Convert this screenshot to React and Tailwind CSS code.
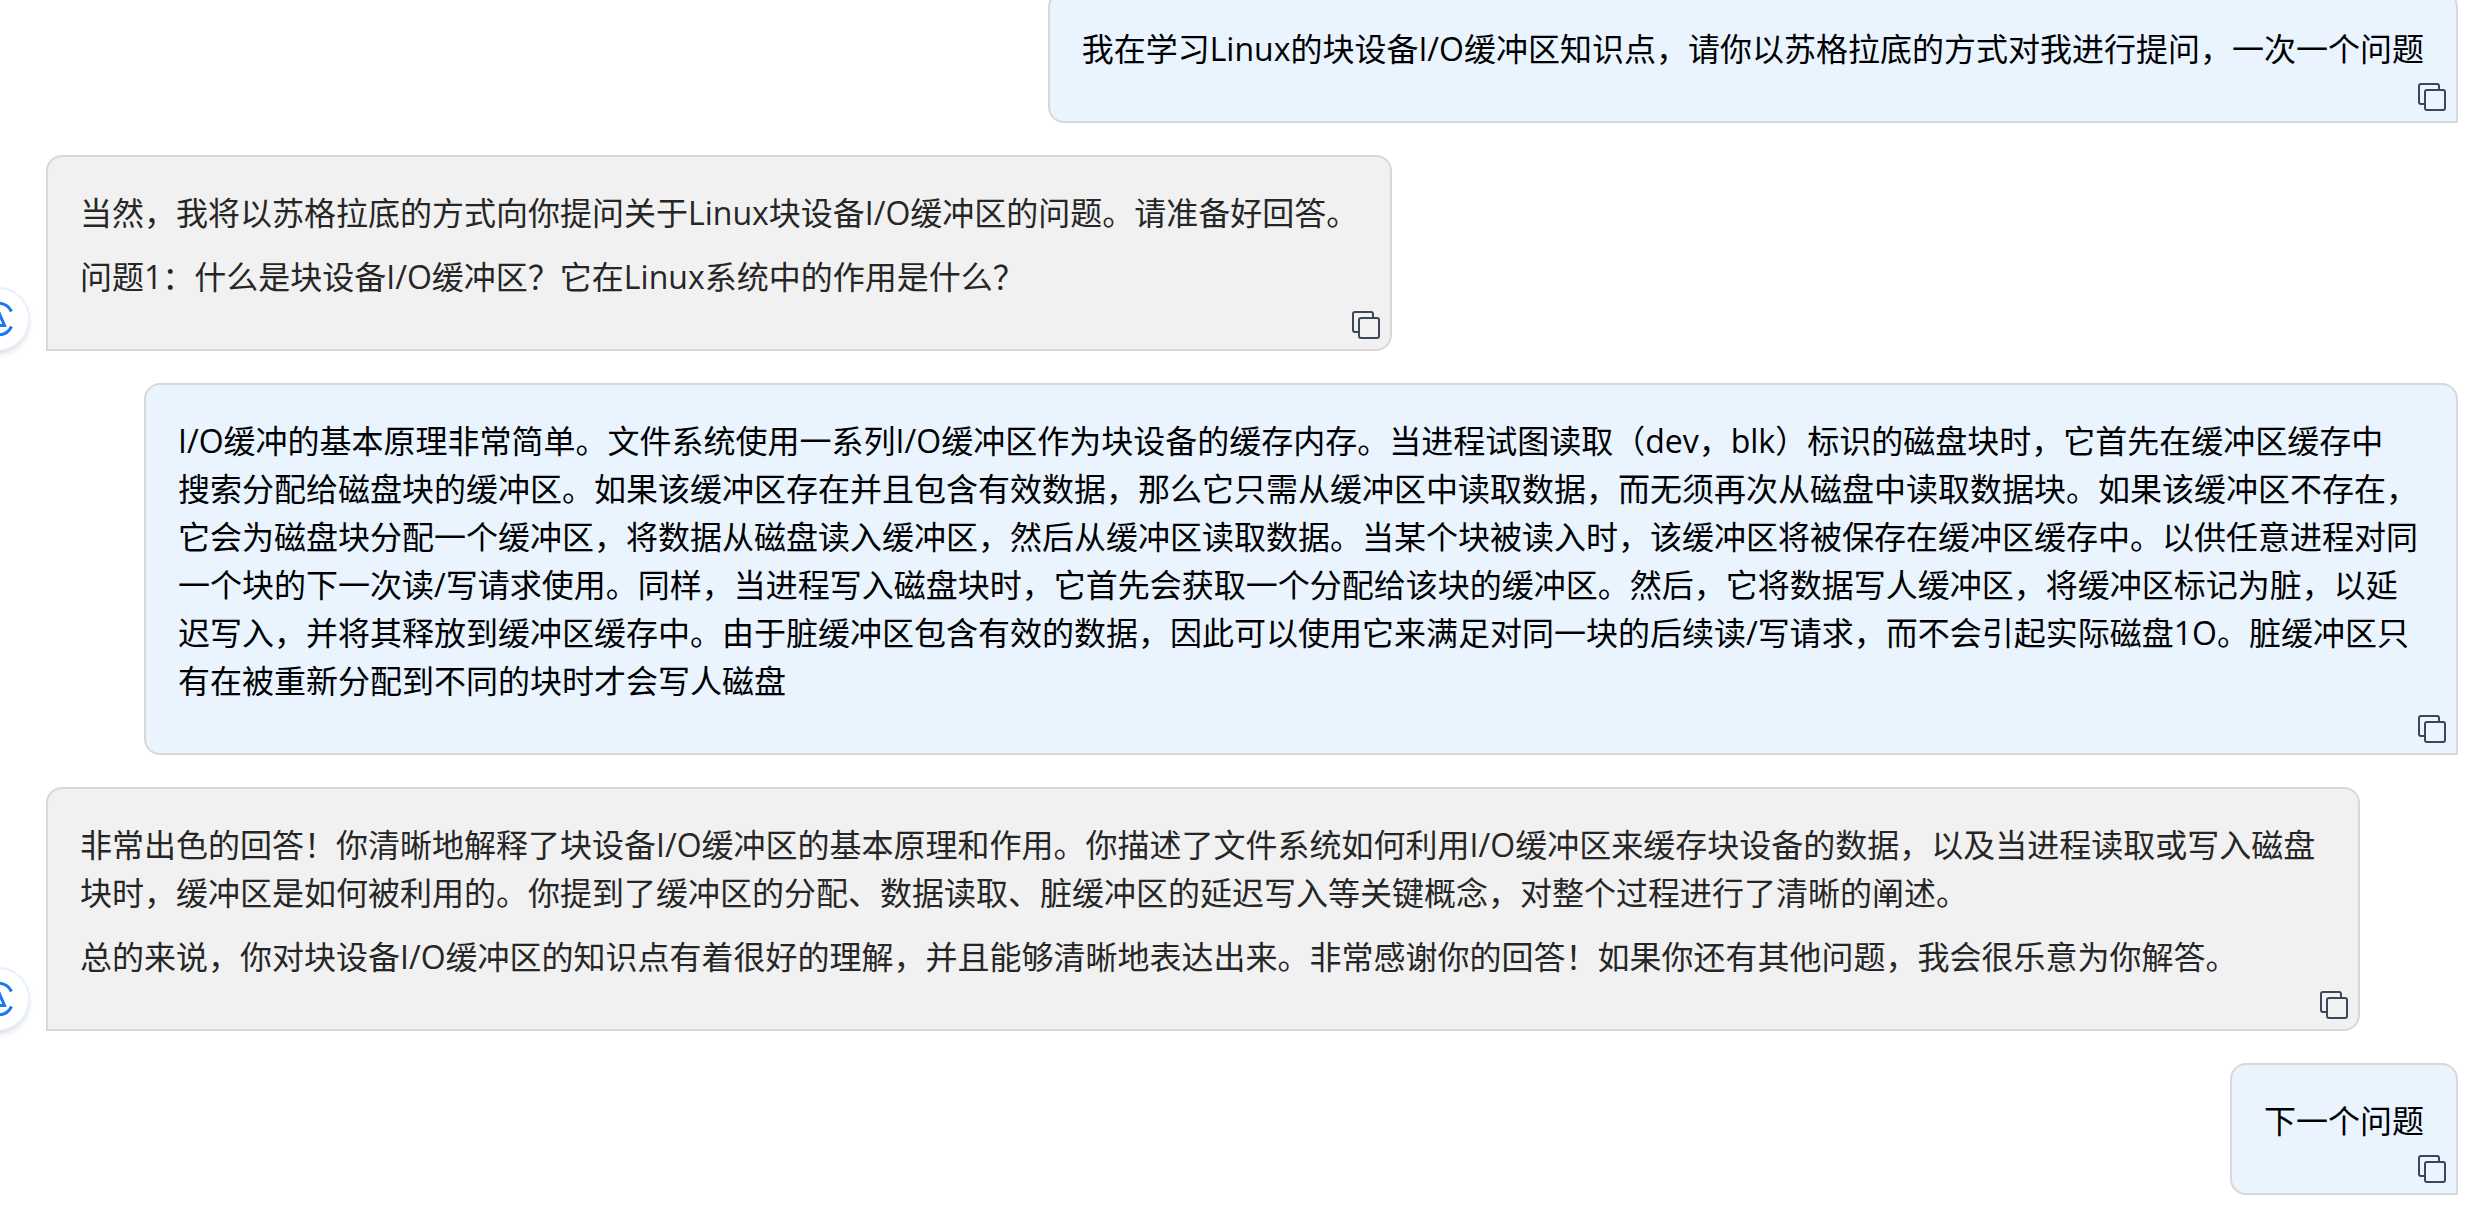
import React from "react";

const messages = [
  {
    id: 1,
    role: "user",
    paragraphs: [
      "我在学习Linux的块设备I/O缓冲区知识点，请你以苏格拉底的方式对我进行提问，一次一个问题",
    ],
  },
  {
    id: 2,
    role: "assistant",
    paragraphs: [
      "当然，我将以苏格拉底的方式向你提问关于Linux块设备I/O缓冲区的问题。请准备好回答。",
      "问题1：什么是块设备I/O缓冲区？它在Linux系统中的作用是什么？",
    ],
  },
  {
    id: 3,
    role: "user",
    paragraphs: [
      "I/O缓冲的基本原理非常简单。文件系统使用一系列I/O缓冲区作为块设备的缓存内存。当进程试图读取（dev，blk）标识的磁盘块时，它首先在缓冲区缓存中\n搜索分配给磁盘块的缓冲区。如果该缓冲区存在并且包含有效数据，那么它只需从缓冲区中读取数据，而无须再次从磁盘中读取数据块。如果该缓冲区不存在，它会为磁盘块分配一个缓冲区，将数据从磁盘读入缓冲区，然后从缓冲区读取数据。当某个块被读入时，该缓冲区将被保存在缓冲区缓存中。以供任意进程对同一个块的下一次读/写请求使用。同样，当进程写入磁盘块时，它首先会获取一个分配给该块的缓冲区。然后，它将数据写人缓冲区，将缓冲区标记为脏，以延迟写入，并将其释放到缓冲区缓存中。由于脏缓冲区包含有效的数据，因此可以使用它来满足对同一块的后续读/写请求，而不会引起实际磁盘1O。脏缓冲区只有在被重新分配到不同的块时才会写人磁盘",
    ],
  },
  {
    id: 4,
    role: "assistant",
    paragraphs: [
      "非常出色的回答！你清晰地解释了块设备I/O缓冲区的基本原理和作用。你描述了文件系统如何利用I/O缓冲区来缓存块设备的数据，以及当进程读取或写入磁盘块时，缓冲区是如何被利用的。你提到了缓冲区的分配、数据读取、脏缓冲区的延迟写入等关键概念，对整个过程进行了清晰的阐述。",
      "总的来说，你对块设备I/O缓冲区的知识点有着很好的理解，并且能够清晰地表达出来。非常感谢你的回答！如果你还有其他问题，我会很乐意为你解答。",
    ],
  },
  {
    id: 5,
    role: "user",
    paragraphs: ["下一个问题"],
  },
];

const Avatar = () => (
  <div className="-ml-20 mr-4 flex size-16 shrink-0 items-center justify-center rounded-full border-2 border-[#e7f2ff] bg-white shadow-md">
    <svg
      viewBox="0 0 36 36"
      className="size-9"
      fill="none"
      stroke="#1a78f2"
      strokeWidth="3"
    >
      <path d="M31.5 10.5A15 15 0 0 0 4.5 10.5" />
      <path d="M4.5 25.5A15 15 0 0 0 31.5 25.5" />
      <path d="M12 24.5h12.5L18 9.5 11 25.5" />
    </svg>
  </div>
);

const CopyButton = () => (
  <button
    type="button"
    aria-label="复制"
    className="absolute right-[10px] bottom-[10px] size-7 cursor-pointer text-[#3c4858]"
  >
    <svg
      viewBox="0 0 28 28"
      className="size-7"
      fill="none"
      stroke="currentColor"
      strokeWidth="2"
    >
      <path d="M7 21H3a2 2 0 0 1-2-2V3a2 2 0 0 1 2-2h16a2 2 0 0 1 2 2v4" />
      <rect x="7" y="7" width="20" height="20" rx="2" />
    </svg>
  </button>
);

const Message = ({ role, paragraphs }) => {
  const isUser = role === "user";

  return (
    <div className={isUser ? "flex justify-end" : "flex items-end"}>
      {!isUser && <Avatar />}
      <div
        className={`relative max-w-[calc(100%-98px)] rounded-2xl border-2 border-[#d8d8d8] px-8 pt-8 pb-12 ${
          isUser
            ? "rounded-br-none bg-[#e9f4ff] text-black"
            : "rounded-bl-none bg-[#f1f1f1] text-[#262626]"
        }`}
      >
        <div className="flex flex-col gap-4">
          {/* pre-line keeps the line breaks typed by the user */}
          {paragraphs.map((text) => (
            <p key={text} className="whitespace-pre-line">
              {text}
            </p>
          ))}
        </div>
        <CopyButton />
      </div>
    </div>
  );
};

const App = () => {
  return (
    <main
      lang="zh-CN"
      className="-mt-[9px] flex flex-col gap-8 bg-white pr-[10px] pl-[46px] font-['Open_Sans','Noto_Sans_CJK_SC',sans-serif] text-[32px] leading-[48px]"
    >
      {messages.map((message) => (
        <Message key={message.id} {...message} />
      ))}
    </main>
  );
};

export default App;
